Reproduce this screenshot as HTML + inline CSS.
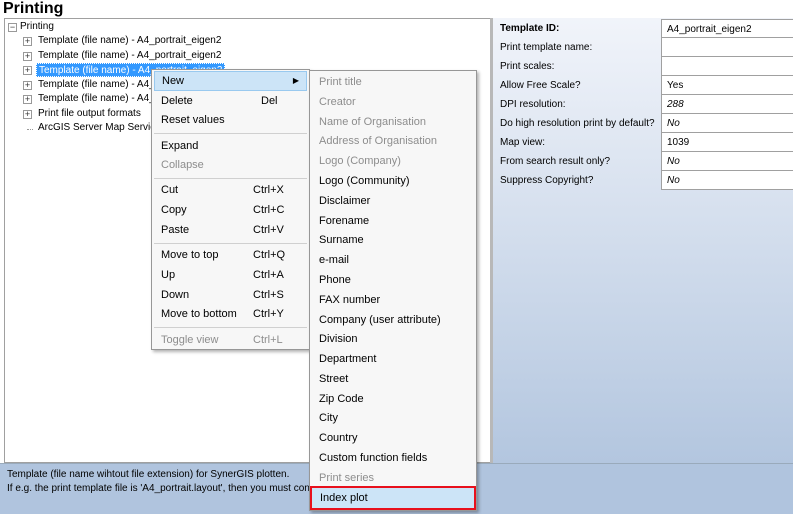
<!DOCTYPE html>
<html><head><meta charset="utf-8"><style>
*{margin:0;padding:0;box-sizing:border-box}
body{width:793px;height:514px;overflow:hidden;background:#fff;font-family:"Liberation Sans",sans-serif;font-size:10px;color:#000;position:relative}
.abs{position:absolute}
#title{left:3px;top:0;font-size:16px;font-weight:bold;line-height:18px}
#tree{left:4px;top:18px;width:487px;height:445px;border:1px solid #a0a0a0;border-right:1px solid #c8c8c8;background:#fff}
.ti{position:absolute;height:14px;line-height:14px;white-space:nowrap;font-size:10px}
.pm{position:absolute;width:9px;height:9px;border:1px solid #999;background:#fff;font-size:9px;line-height:7px;text-align:center;color:#333}
.dot{position:absolute;border-top:1px dotted #999;width:6px}
#right{left:490px;top:18px;width:303px;height:445px;background:linear-gradient(#f1f4fa,#b3c6df);border-left:3px solid #b8b8b8}
.row{position:absolute;left:7px;height:19px;line-height:19px;width:300px;font-size:10px}
.val{position:absolute;left:161px;top:0;width:140px;height:19px;background:#fff;border:1px solid #a0a0a0;border-top:none;padding-left:5px}
#bottom{left:0;top:463px;width:793px;height:51px;background:#b0c4de;border-top:1px solid #9ab}
.menu{position:absolute;background:#f7f7f7;border:1px solid #979797;box-shadow:2px 2px 3px rgba(0,0,0,.3);font-size:11px}
.mi{position:absolute;left:2px;right:2px;height:20px;line-height:20px;padding-left:7px}
.mi .k{position:absolute;left:99px}
.dis{color:#8d8d8d}
.sep{position:absolute;left:2px;right:2px;border-top:1px solid #d0d0d0}
</style></head><body>
<div id="title" class="abs">Printing</div>
<div id="tree" class="abs">
 <div class="pm" style="left:3px;top:4px">−</div><div class="ti" style="left:15px;top:1px">Printing</div>
 <div class="pm" style="left:18px;top:18px">+</div><div class="ti" style="left:33px;top:15px">Template (file name) - A4_portrait_eigen2</div>
 <div class="pm" style="left:18px;top:33px">+</div><div class="ti" style="left:33px;top:30px">Template (file name) - A4_portrait_eigen2</div>
 <div class="pm" style="left:18px;top:47px">+</div><div class="ti" style="left:31px;top:44px;background:#3399ff;color:#fff;padding:0 2px;border:1px dotted #fff">Template (file name) - A4_portrait_eigen2</div>
 <div class="pm" style="left:18px;top:62px">+</div><div class="ti" style="left:33px;top:59px">Template (file name) - A4_portrait_eigen2</div>
 <div class="pm" style="left:18px;top:76px">+</div><div class="ti" style="left:33px;top:73px">Template (file name) - A4_portrait_eigen2</div>
 <div class="pm" style="left:18px;top:91px">+</div><div class="ti" style="left:33px;top:88px">Print file output formats</div>
 <div class="dot" style="left:22px;top:110px"></div><div class="ti" style="left:33px;top:102px">ArcGIS Server Map Services</div>
</div>
<div id="right" class="abs">
 <div class="row" style="top:1px;font-weight:bold">Template ID:<div class="val" style="font-weight:normal;border-top:1px solid #a0a0a0">A4_portrait_eigen2</div></div>
 <div class="row" style="top:20px">Print template name:<div class="val"></div></div>
 <div class="row" style="top:39px">Print scales:<div class="val"></div></div>
 <div class="row" style="top:58px">Allow Free Scale?<div class="val">Yes</div></div>
 <div class="row" style="top:77px">DPI resolution:<div class="val" style="font-style:italic">288</div></div>
 <div class="row" style="top:96px">Do high resolution print by default?<div class="val" style="font-style:italic">No</div></div>
 <div class="row" style="top:115px">Map view:<div class="val">1039</div></div>
 <div class="row" style="top:134px">From search result only?<div class="val" style="font-style:italic">No</div></div>
 <div class="row" style="top:153px">Suppress Copyright?<div class="val" style="font-style:italic">No</div></div>
</div>
<div id="bottom" class="abs"><div style="position:absolute;left:7px;top:4px;line-height:14px;font-size:10px">Template (file name wihtout file extension) for SynerGIS plotten.<br>If e.g. the print template file is 'A4_portrait.layout', then you must configure 'A4_portrait'.</div></div>

<div class="menu" style="left:151px;top:69px;width:159px;height:281px">
 <div class="mi" style="top:1px;background:#cce4f7;border:1px solid #99c9ef;line-height:18px">New<span style="position:absolute;right:7px;top:0;font-size:8px">▶</span></div>
 <div class="mi" style="top:21px">Delete<span class="k" style="left:107px">Del</span></div>
 <div class="mi" style="top:40px">Reset values</div>
 <div class="sep" style="top:63px"></div>
 <div class="mi" style="top:66px">Expand</div>
 <div class="mi dis" style="top:85px">Collapse</div>
 <div class="sep" style="top:108px"></div>
 <div class="mi" style="top:110px">Cut<span class="k">Ctrl+X</span></div>
 <div class="mi" style="top:130px">Copy<span class="k">Ctrl+C</span></div>
 <div class="mi" style="top:150px">Paste<span class="k">Ctrl+V</span></div>
 <div class="sep" style="top:173px"></div>
 <div class="mi" style="top:175px">Move to top<span class="k">Ctrl+Q</span></div>
 <div class="mi" style="top:195px">Up<span class="k">Ctrl+A</span></div>
 <div class="mi" style="top:215px">Down<span class="k">Ctrl+S</span></div>
 <div class="mi" style="top:234px">Move to bottom<span class="k">Ctrl+Y</span></div>
 <div class="sep" style="top:257px"></div>
 <div class="mi dis" style="top:260px">Toggle view<span class="k">Ctrl+L</span></div>
</div>

<div class="menu" style="left:309px;top:70px;width:168px;height:441px">
 <div class="mi dis" style="top:1px">Print title</div>
 <div class="mi dis" style="top:21px">Creator</div>
 <div class="mi dis" style="top:41px">Name of Organisation</div>
 <div class="mi dis" style="top:60px">Address of Organisation</div>
 <div class="mi dis" style="top:80px">Logo (Company)</div>
 <div class="mi" style="top:100px">Logo (Community)</div>
 <div class="mi" style="top:120px">Disclaimer</div>
 <div class="mi" style="top:140px">Forename</div>
 <div class="mi" style="top:159px">Surname</div>
 <div class="mi" style="top:179px">e-mail</div>
 <div class="mi" style="top:199px">Phone</div>
 <div class="mi" style="top:219px">FAX number</div>
 <div class="mi" style="top:239px">Company (user attribute)</div>
 <div class="mi" style="top:258px">Division</div>
 <div class="mi" style="top:278px">Department</div>
 <div class="mi" style="top:298px">Street</div>
 <div class="mi" style="top:318px">Zip Code</div>
 <div class="mi" style="top:337px">City</div>
 <div class="mi" style="top:357px">Country</div>
 <div class="mi" style="top:377px">Custom function fields</div>
 <div class="mi dis" style="top:397px">Print series</div>
 <div class="mi" style="top:415px;left:0;right:0;height:24px;line-height:20px;background:#cce4f7;border:2px solid #e8101c;padding-left:8px">Index plot</div>
</div>
</body></html>
